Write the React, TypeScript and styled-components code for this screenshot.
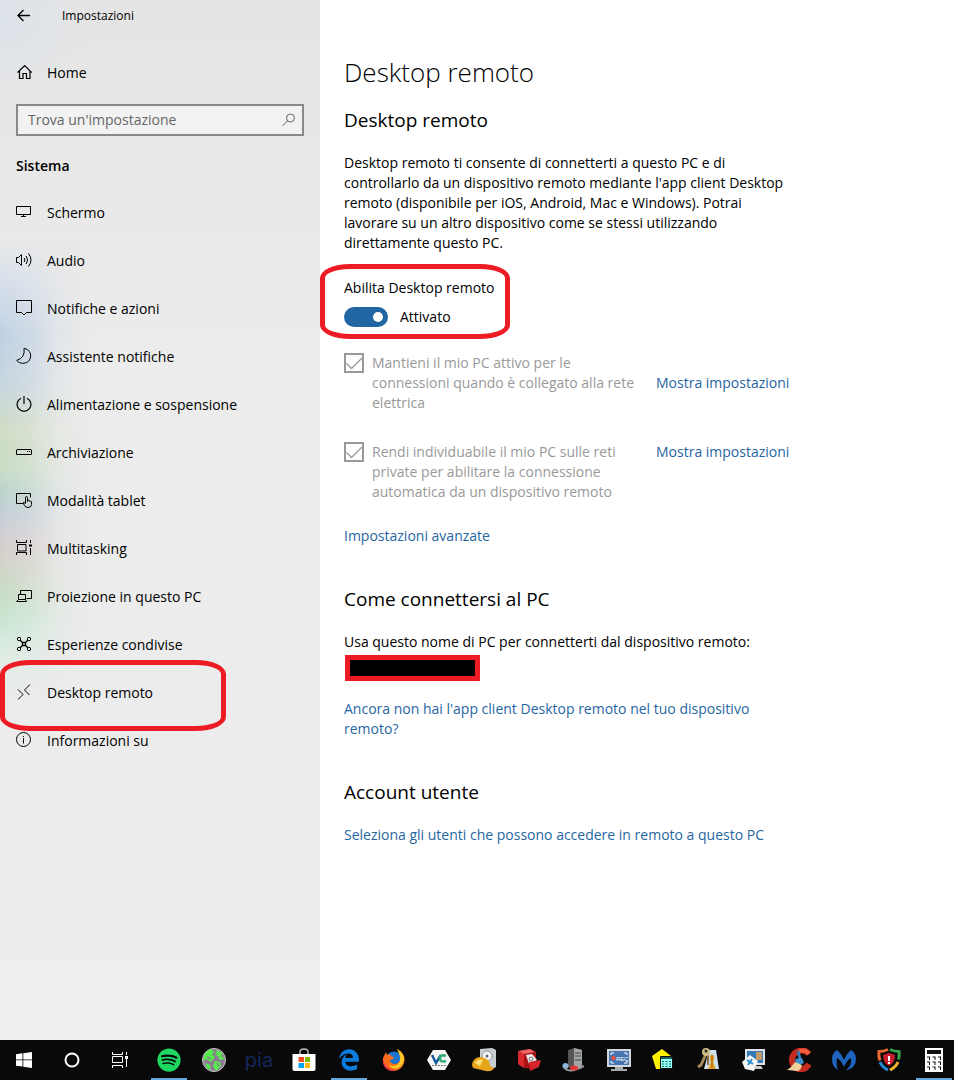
import React, { useState } from "react";
import styled, { createGlobalStyle, css } from "styled-components";
import { FaEdgeLegacy } from "react-icons/fa6";
import { FaSpotify } from "react-icons/fa";

const RED = "#ed1c24";
const BLUE = "#1f66a2";

const GlobalStyle = createGlobalStyle`
  *, *::before, *::after { box-sizing: border-box; }
  body {
    margin: 0;
    background: #fff;
    color: #000;
    font: 14px/20px "Open Sans", "Noto Sans", sans-serif;
  }
  button, input { font: inherit; color: inherit; }
`;

const Desktop = styled.div`
  min-height: 100vh;
  display: flex;
  flex-direction: column;
`;

const SettingsWindow = styled.div`
  flex: 1;
  display: flex;
`;

const Sidebar = styled.aside`
  position: relative;
  isolation: isolate;
  flex: 0 0 320px;
  background:
    radial-gradient(ellipse 90px 80px at 0 20px, rgba(218, 226, 235, 0.8), transparent),
    linear-gradient(#e4e4e4, #ececec 360px, #ececec 760px, #eeeef0);
  /* wallpaper colours showing through the translucent left edge */
  &::before {
    content: "";
    position: absolute;
    z-index: -1;
    inset: 0 auto auto 0;
    width: 90px;
    height: 700px;
    background: linear-gradient(
      transparent 240px,
      #d6dfea 280px,
      #bfd0e3 335px,
      #c6d5de 385px,
      #cfdcc4 430px,
      #c8dcc4 468px,
      #bbd3cb 492px,
      #c4ced6 515px,
      #d4cdcf 540px,
      #d3d1c8 562px,
      #c8dcc4 592px,
      #c8e6d2 622px,
      #dcebe2 650px,
      transparent 695px
    );
    mask-image: linear-gradient(to right, #000, rgba(0, 0, 0, 0.65) 32px, rgba(0, 0, 0, 0.2) 60px, transparent);
  }
`;

const TitleBar = styled.header`
  height: 32px;
  padding-left: 16px;
  display: flex;
  align-items: center;
  gap: 30px;
  font-size: 12px;
`;

const IconButton = styled.button`
  display: flex;
  padding: 0;
  border: 0;
  background: none;
`;

const NavLink = styled.a`
  position: relative;
  height: 48px;
  padding-left: 16px;
  display: flex;
  align-items: center;
  gap: 15px;
  color: #000;
  text-decoration: none;
`;

const HomeArea = styled.div`
  padding: 17px 0 7px;
`;

const SearchBox = styled.form`
  height: 32px;
  margin: 0 16px;
  padding: 0 6px 0 10px;
  display: flex;
  align-items: center;
  border: 2px solid #8a8a8a;
  background: #f2f2f2;
`;

const SearchInput = styled.input`
  flex: 1;
  min-width: 0;
  height: 28px;
  padding: 0 0 2px;
  border: 0;
  outline: 0;
  background: none;
  &::placeholder { color: #666; opacity: 1; }
`;

const SidebarTitle = styled.h2`
  margin: 20px 16px 13px;
  font-size: 14px;
  line-height: 20px;
  font-weight: 600;
`;

const Marker = styled.span<{ $width: number; $height: number; $top: number; $left: number }>`
  position: absolute;
  top: ${(p) => p.$top}px;
  left: ${(p) => p.$left}px;
  width: ${(p) => p.$width}px;
  height: ${(p) => p.$height}px;
  border: 5px solid ${RED};
  border-radius: 30px / 14px;
  pointer-events: none;
`;

const Content = styled.main`
  flex: 1;
  min-width: 0;
  padding: 52px 24px 40px;
`;

const PageTitle = styled.h1`
  margin: 0 0 16px;
  font-size: 26px;
  line-height: 40px;
  font-weight: 300;
`;

const Section = styled.section`
  max-width: 450px;
  margin-bottom: 41px;
`;

const SectionTitle = styled.h2`
  margin: 0 0 21px;
  font-size: 19px;
  line-height: 24px;
  font-weight: 400;
`;

const Text = styled.p`
  margin: 0;
`;

const Link = styled.a`
  color: ${BLUE};
  text-decoration: none;
`;

const ToggleField = styled.div`
  position: relative;
  margin: 25px 0 26px;
`;

const FieldLabel = styled.label`
  display: block;
  margin-bottom: 9px;
`;

const ToggleRow = styled.div`
  display: flex;
  align-items: center;
  gap: 12px;
`;

const Switch = styled.input`
  appearance: none;
  width: 44px;
  height: 20px;
  margin: 0;
  padding: 5px;
  display: flex;
  justify-content: ${(p) => (p.checked ? "flex-end" : "flex-start")};
  border-radius: 10px;
  background: ${(p) => (p.checked ? BLUE : "#999")};
  &::before {
    content: "";
    width: 10px;
    height: 10px;
    border-radius: 50%;
    background: #fff;
  }
`;

const OptionList = styled.div`
  display: flex;
  flex-direction: column;
  gap: 29px;
`;

const OptionRow = styled.div<{ $middle?: boolean }>`
  display: grid;
  grid-template-columns: 270px auto;
  justify-content: start;
  align-items: ${(p) => (p.$middle ? "center" : "start")};
  column-gap: 42px;
  white-space: nowrap;
`;

const Option = styled.label`
  display: grid;
  grid-template-columns: 20px 270px;
  column-gap: 8px;
  color: #999;
  white-space: normal;
`;

const Box = styled.span`
  display: grid;
  height: 20px;
  > * { grid-area: 1 / 1; }
`;

const CheckInput = styled.input`
  appearance: none;
  width: 20px;
  height: 20px;
  margin: 0;
  border: 2px solid #999;
`;

const Advanced = styled.p`
  margin: 24px 0 0;
`;

const Redacted = styled.div`
  width: 135px;
  height: 26px;
  margin: 3px 1px 18px;
  border: 5px solid ${RED};
  background: #000;
`;

const Taskbar = styled.footer`
  height: 40px;
  display: flex;
  overflow: hidden;
  background: #090909;
`;

const SystemButtons = styled.div`
  display: flex;
  margin-right: 7px;
`;

const AppButtons = styled.div`
  display: flex;
  gap: 9px;
`;

const TaskButton = styled.button<{ $system?: boolean; $active?: boolean }>`
  flex: none;
  width: ${(p) => (p.$system ? 48 : 36)}px;
  height: 40px;
  padding: 0;
  display: grid;
  place-items: center;
  border: 0;
  background: none;
  ${(p) => p.$active && css`box-shadow: inset 0 -2px #62a6dc;`}
`;

const PiaName = styled.span`
  color: #14265c;
  font: 20px/24px Inter, sans-serif;
`;

const Glyph = ({ children }: { children: React.ReactNode }) => (
  <svg width="16" height="18" viewBox="0 0 16 18" fill="none" stroke="#000">
    {children}
  </svg>
);

const Art = ({ children }: { children: React.ReactNode }) => (
  <svg width="24" height="24" viewBox="0 0 24 24" fill="none">{children}</svg>
);

const navItems: { label: string; icon: React.ReactNode; marked?: boolean }[] = [
  { label: "Schermo", icon: <path d="M.5 2.5h14v8H.5zM7.5 10.500v2M5 12.500h5" /> },
  { label: "Audio", icon: <><path d="M.5 5.500v5h2l3 3V2.500l-3 3z" /><path d="M8.200 6q1.300 2 0 4M10.200 4q2.800 4 0 8M12.500 1.500q5 6.500 0 13" /></> },
  { label: "Notifiche e azioni", icon: <path d="M.5.500h15v12h-5L8 15l-2.500-2.500h-5z" /> },
  { label: "Assistente notifiche", icon: <path d="M8 .5q1.500 9-7.300 12c3 3.500 8.500 3.800 12 .5C17 8 14 1 8 .500z" /> },
  { label: "Alimentazione e sospensione", icon: <path d="M5 2.200a6.900 6.900 0 1 0 6 0M8 0v8" strokeWidth="1.200" /> },
  { label: "Archiviazione", icon: <><path d="M1 5.500h14l.5.500v4.500H.5V6z" /><path d="M11 7.500h1M13 7.500h1" /></> },
  { label: "Modalità tablet", icon: <><path d="M7 11.500H.5v-10h14v4" /><path d="M9.500 11.500V5.500q0-1 1-1t1 1v4-1.500q1.500-.5 1.500 1 2-.5 2.500 1v2.500q0 3-3.500 3-2.500 0-3.500-2l-1.500-2.500q.5-1.500 2.500.5z" /></> },
  { label: "Multitasking", icon: <><path d="M.5 0v2.500h10V0M.5 15v-2.500h10V15M1.500 4.500h8.500v6.500h-8.500zM14.500 0v3M14.500 8v7" /><path d="M13 4.500h3v2h-3z" fill="#000" stroke="none" /></> },
  { label: "Proiezione in questo PC", icon: <><path d="M4.500 6V2.500h11v8h-5" /><path d="M2.500 11.500v-5h7v5M.5 13.500h10l-1-2h-7z" /></> },
  { label: "Esperienze condivise", icon: <><circle cx="3" cy="3" r="1.700" /><circle cx="13" cy="3" r="1.700" /><circle cx="3" cy="13" r="1.700" /><circle cx="13" cy="13" r="1.700" /><path d="M4.200 4.200 6.500 6.500M11.800 4.200 9.500 6.500M4.200 11.800 6.500 9.500M11.800 11.800 9.500 9.500M6.500 6.500h3v3h-3z" strokeWidth="1.300" /></> },
  { label: "Desktop remoto", icon: <path d="m2 5.500 5 5L2 15.500M14 .5l-5.500 5.500 5 5" />, marked: true },
  { label: "Informazioni su", icon: <><circle cx="7.500" cy="7.500" r="7" /><path d="M7.500 6v5.500M7.500 4v1" /></> },
];

const apps: { name: string; active?: boolean; icon: React.ReactNode }[] = [
  { name: "Spotify", active: true, icon: <FaSpotify size={24} color="#1ed760" /> },
  {
    name: "Globo",
    icon: <Art><circle cx="12" cy="12" r="11.500" fill="#8d7a93" stroke="#c9c9c9" /><path d="M3 5 8 1l4 2-2 4 3 2-4 5-5-3-3 2zM15 2l5 3 2 6-4 1-2-4-3-1zM13 13l5 1 1 4-5 5-3-5zM3 15l5 2 1 5-4-2z" fill="#55ef4d" /><path d="m12 4 2 2-2 2M5 9l4 2M15 15l2 3M19 7l2 2" stroke="#7c9a77" strokeWidth="2" /></Art>,
  },
  { name: "Private Internet Access", icon: <PiaName>pia</PiaName> },
  {
    name: "Store",
    icon: <Art><path d="M8 7V4q0-3 4-3t4 3v3" stroke="#bbb" strokeWidth="1.500" /><path d="M.5 6h23v15q0 2-2 2h-19q-2 0-2-2z" fill="#fff" /><path d="M6.500 9H12v5H6.500z" fill="#f25022" /><path d="M13 9h5v5h-5z" fill="#7fba00" /><path d="M6.500 15H12v5H6.500z" fill="#00a4ef" /><path d="M13 15h5v5h-5z" fill="#ffb900" /></Art>,
  },
  { name: "Edge", active: true, icon: <FaEdgeLegacy size={22} color="#0b7bdc" /> },
  {
    name: "Firefox",
    icon: <Art><circle cx="12" cy="12.500" r="9" fill="#1b74d2" /><path d="M15 1c6 3 9 8 7 14-2 6-7 8-11 8C4 23 0 17 1 10l3-6 1 3 3-1c0 2 2 3 4 3l-1 2-3 1c0 4 5 5 8 3 4-3 3-8-1-14z" fill="#ff6d1b" /><path d="M15 1c8 5 9 12 4 17-4 4-10 3-12-1 4 2 8 1 10-2 3-5 0-9-2-14z" fill="#ffca28" /><path d="M1 11c1 7 6 12 14 11C7 25 0 19 1 11z" fill="#e81e5c" /></Art>,
  },
  {
    name: "VeraCrypt",
    icon: <Art><path d="M6 2h12l6 10-6 10H6L0 12z" fill="#f5f5f5" /><path d="m5 7 4 8 5-8" stroke="#16599d" strokeWidth="2.500" /><path d="M19 8q-5-2-6 2 0 5 6 3" stroke="#2aaf70" strokeWidth="2.500" /><path d="M5 17.500h14" stroke="#777" strokeDasharray="2 1" /></Art>,
  },
  {
    name: "Strumento disco",
    icon: <Art><path d="m8 1 12-1 4 2v17l-4 2-12-2z" fill="#c9cdd1" /><circle cx="15" cy="8" r="5" fill="#f4f6f7" stroke="#8c9297" /><circle cx="15" cy="8" r="1.500" fill="#60676c" /><path d="M0 17q1-8 9-8c6 1 9 4 9 9l4 2q-2 4-8 3L1 20z" fill="#e5a51c" /><path d="M3 15q3-5 8-3l-3 6z" fill="#ffe074" /></Art>,
  },
  {
    name: "Archivio rosso",
    icon: <Art><path d="m1 3 12-2 6 3v5l-1 12-11-1-6-4z" fill="#a51217" /><path d="M1 3 7 6v14l-6-4z" fill="#d92b2e" /><path d="m2 3 11-2 5 3-11 2z" fill="#f06565" /><path d="m9 7 6-1 5 6-8 4z" fill="#eee" /><path d="m12 14 12-2-2 7-9 4z" fill="#d4252c" /><circle cx="14" cy="11" r="2" stroke="#777" /></Art>,
  },
  {
    name: "Computer",
    icon: <Art><path d="m6 2 6-2 8 2v18l-8 2-6-3z" fill="#555" /><path d="m12 0 8 2v18l-8 2z" fill="#a3a6a6" /><path d="M13 5h6M13 8h6M13 12h6" stroke="#444" /><circle cx="3.500" cy="18" r="3" fill="#8ab5dd" /><path d="M3 21q5 3 12 0l7-3" stroke="#999" strokeWidth="2" /><ellipse cx="12" cy="20" rx="4" ry="2.500" fill="#e33636" /></Art>,
  },
  {
    name: "Registratore schermo",
    icon: <Art><path d="M0 1h24v18H0z" fill="#d2d7dc" /><path d="M2 3h20v14H2z" fill="#4674b0" /><path d="M4 7V5h3M17 5h3v2M4 13v2h3M17 15h3v-2" stroke="#fff" /><circle cx="6.500" cy="10" r="2" fill="#ff4930" /><text x="9" y="12.500" fill="#fff" fontFamily="Liberation Sans, sans-serif" fontSize="6">REC</text><path d="M8 19h8v2h4v2H4v-2h4z" fill="#a5a9a9" /></Art>,
  },
  {
    name: "Calendario",
    icon: <Art><path d="m0 8 10-7 9 7-10 13-5 0z" fill="#fff000" /><path d="M8.500 8.500h12v12h-12z" fill="#9ff" stroke="#111" /><path d="M9 9h11v2H9z" fill="#176060" /><path d="M10 13.500h2M13.500 13.500h2M17 13.500h2M10 16h2M13.500 16h2M17 16h2M10 18.500h2M13.500 18.500h2M17 18.500h2" stroke="#064" /></Art>,
  },
  {
    name: "Chiavi",
    icon: <Art><path d="M12 2h7l3 19H7z" fill="#cfe0ee" /><path d="M9 6 4 17l-3 2" stroke="#a88b5b" strokeWidth="3" /><path d="M11 6v11" stroke="#8a6c40" strokeWidth="2" /><circle cx="9" cy="4" r="4" fill="#d2bd88" /><circle cx="9" cy="3" r="1.500" fill="#222" /><path d="M15 6q4 3 1 8l3 7h-8l3-7q-3-5 1-8z" fill="#eaa21f" /><path d="M15 7v13" stroke="#9a5c12" /></Art>,
  },
  {
    name: "Monitor remoto",
    icon: <Art><path d="M3 1h20v16H3z" fill="#e0e3e5" /><path d="M5 3h16v12H5z" fill="#3679b9" /><path d="M14 4h6v8h-6z" fill="#c39b6b" /><path d="m0 14 8-7 8 6-4 10-9-2z" fill="#f4f6f8" /><path d="m5 12 6 4M10 11l-4 6" stroke="#248fcc" strokeWidth="2" /><path d="M13 18h6l2 3h-9z" fill="#ccc" /></Art>,
  },
  {
    name: "CCleaner",
    icon: <Art><path d="M22 6Q18 1 12 3 5 5 5 12q1 10 10 9 4 0 7-5" stroke="#c62b20" strokeWidth="6" /><path d="M22 6Q18 1 12 3" stroke="#f15b3a" strokeWidth="4" /><path d="m13 11-2-8" stroke="#357bb8" strokeWidth="3" /><path d="m8 11 7-1 2 5-7 3z" fill="#3f91cf" /><path d="m8 14 7 3q-1 5-4 6l-11-1q5-3 8-8z" fill="#efcf9c" /></Art>,
  },
  {
    name: "Malwarebytes",
    icon: <Art><path d="M6 22Q0 19 0 11q0-6 5-9 4 3 7 10 3-7 7-10 5 3 5 9 0 8-8 11h-2q6-4 5-12-4 2-7 9-3-7-7-9-1 8 1 12z" fill="#1e63bd" /></Art>,
  },
  {
    name: "Scudo",
    icon: <Art><path d="M11 1.500q-4 2-9 2Q1.500 9 3 12.500" stroke="#ec6b31" strokeWidth="3" /><path d="M13 1.500q4 2 9 2 .5 4-.5 8" stroke="#35a34a" strokeWidth="3" /><path d="M3 14q2 5 8 8" stroke="#238bd5" strokeWidth="3" /><path d="M13 22q6-3 8-8" stroke="#f4b52d" strokeWidth="3" /><path d="m12 5 6 2q0 8-6 11-6-3-6-11z" fill="#c91f2d" /><path d="M12 8v5M12 14v2" stroke="#fff" strokeWidth="2" /></Art>,
  },
  {
    name: "Calcolatrice",
    active: true,
    icon: <Art><path d="M3 0h18v24H3z" fill="#fff" /><path d="M5 2h14v4H5z" fill="#111" /><path d="M5 9h3M10.500 9h3M16 9h3M5 14h3M10.500 14h3M16 14h3M5 19h3M10.500 19h3M16 19h3M7.500 9v3M13 9v3M18.500 9v3M7.500 14v3M13 14v3M18.500 14v3M7.500 19v3M13 19v3M18.500 19v3" stroke="#111" /></Art>,
  },
];

function DisabledOption({ id, children }: { id: string; children: React.ReactNode }) {
  return (
    <Option htmlFor={id}>
      <Box>
        <CheckInput id={id} type="checkbox" defaultChecked disabled />
        <svg width="20" height="20" viewBox="0 0 20 20" fill="none" stroke="#999" strokeWidth="1.300"><path d="m2.500 10.500 5 5L18 5" /></svg>
      </Box>
      <span>{children}</span>
    </Option>
  );
}

export default function App() {
  const [enabled, setEnabled] = useState(true);
  return (
    <>
      <GlobalStyle />
      <Desktop>
        <SettingsWindow>
          <Sidebar>
            <TitleBar>
              <IconButton aria-label="Indietro">
                <Glyph><path d="M2 8.500h12M7.500 3 2 8.500 7.500 14" strokeWidth="1.300" /></Glyph>
              </IconButton>
              <span>Impostazioni</span>
            </TitleBar>
            <HomeArea>
              <NavLink href="#home">
                <Glyph><path d="M1.500 8.500 8.700 1.500l7 7M3.500 7v7.500h3.500V9.500h3.500v5H14V7" strokeWidth="1.200" /></Glyph>
                Home
              </NavLink>
            </HomeArea>
            <SearchBox role="search" onSubmit={(e) => e.preventDefault()}>
              <SearchInput aria-label="Trova un'impostazione" placeholder="Trova un'impostazione" />
              <IconButton aria-label="Cerca">
                <svg width="14" height="14" viewBox="0 0 14 14" fill="none" stroke="#666"><circle cx="8.500" cy="5" r="4" /><path d="M5.500 8 .5 13" /></svg>
              </IconButton>
            </SearchBox>
            <SidebarTitle>Sistema</SidebarTitle>
            <nav aria-label="Sistema">
              {navItems.map((item) => (
                <NavLink href="#" key={item.label}>
                  <Glyph>{item.icon}</Glyph>
                  {item.label}
                  {item.marked && <Marker $top={-9} $left={0} $width={226} $height={71} />}
                </NavLink>
              ))}
            </nav>
          </Sidebar>
          <Content>
            <PageTitle>Desktop remoto</PageTitle>
            <Section>
              <SectionTitle>Desktop remoto</SectionTitle>
              <Text>
                Desktop remoto ti consente di connetterti a questo PC e di controllarlo da un dispositivo remoto
                mediante l'app client Desktop remoto (disponibile per iOS, Android, Mac e Windows). Potrai lavorare su
                un altro dispositivo come se stessi utilizzando direttamente questo PC.
              </Text>
              <ToggleField>
                <FieldLabel htmlFor="remote">Abilita Desktop remoto</FieldLabel>
                <ToggleRow>
                  <Switch
                    id="remote"
                    type="checkbox"
                    role="switch"
                    checked={enabled}
                    onChange={(e) => setEnabled(e.target.checked)}
                  />
                  <span>{enabled ? "Attivato" : "Disattivato"}</span>
                </ToggleRow>
                <Marker $top={-14} $left={-24} $width={190} $height={75} />
              </ToggleField>
              <OptionList>
                <OptionRow $middle>
                  <DisabledOption id="awake">
                    Mantieni il mio PC attivo per le connessioni quando è collegato alla rete elettrica
                  </DisabledOption>
                  <Link href="#power">Mostra impostazioni</Link>
                </OptionRow>
                <OptionRow>
                  <DisabledOption id="discover">
                    Rendi individuabile il mio PC sulle reti private per abilitare la connessione automatica da un
                    dispositivo remoto
                  </DisabledOption>
                  <Link href="#network">Mostra impostazioni</Link>
                </OptionRow>
              </OptionList>
              <Advanced><Link href="#advanced">Impostazioni avanzate</Link></Advanced>
            </Section>
            <Section>
              <SectionTitle>Come connettersi al PC</SectionTitle>
              <Text>Usa questo nome di PC per connetterti dal dispositivo remoto:</Text>
              <Redacted />
              <Text><Link href="#client">Ancora non hai l'app client Desktop remoto nel tuo dispositivo remoto?</Link></Text>
            </Section>
            <Section>
              <SectionTitle>Account utente</SectionTitle>
              <Text><Link href="#users">Seleziona gli utenti che possono accedere in remoto a questo PC</Link></Text>
            </Section>
          </Content>
        </SettingsWindow>
        <Taskbar>
          <SystemButtons>
            <TaskButton $system aria-label="Start">
              <svg width="16" height="16" viewBox="0 0 16 16" fill="#fff"><path d="m0 2.200 6.500-.9v6.200H0zM7.300 1.200 16 0v7.500H7.300zM0 8.300h6.500v6.300L0 13.700zM7.300 8.300H16V16l-8.700-1.200z" /></svg>
            </TaskButton>
            <TaskButton $system aria-label="Cortana">
              <svg width="16" height="16" viewBox="0 0 16 16" fill="none" stroke="#fff" strokeWidth="2"><circle cx="8" cy="8" r="6.500" /></svg>
            </TaskButton>
            <TaskButton $system aria-label="Visualizzazione attività">
              <svg width="16" height="16" viewBox="0 0 16 16" fill="none" stroke="#fff"><path d="M.5 0v2.500h10V0M.5 16v-2.500h10V16M.5 4.500h10v6H.5zM14.500 0v3M14.500 7v8" /><path d="M13 4h3v3h-3z" fill="#fff" stroke="none" /></svg>
            </TaskButton>
          </SystemButtons>
          <AppButtons>
            {apps.map((app) => (
              <TaskButton key={app.name} $active={app.active} aria-label={app.name}>{app.icon}</TaskButton>
            ))}
          </AppButtons>
        </Taskbar>
      </Desktop>
    </>
  );
}
